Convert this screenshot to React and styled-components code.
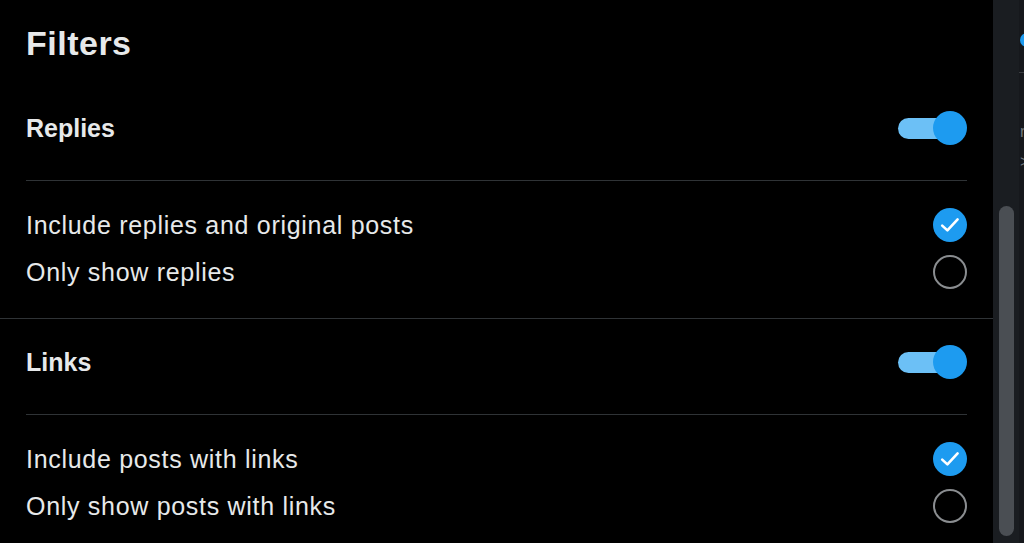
import React from 'react';
import styled, { createGlobalStyle } from 'styled-components';

const TEXT_COLOR = '#e7e9ea';
const DIVIDER_COLOR = '#2f3336';
const ACCENT_COLOR = '#1d9bf0';

const GlobalStyle = createGlobalStyle`
    html, body {
        margin: 0;
        padding: 0;
        background-color: #000;
        font-family: "Liberation Sans", Arial, sans-serif;
        overflow: hidden;
    }
`;

const Page = styled.div`
    display: flex;
    height: 543px;
    width: 1024px;
    overflow: hidden;
`;

const Panel = styled.div`
    flex: 0 0 993px;
    background-color: #000;
    color: ${TEXT_COLOR};
`;

const Title = styled.h2`
    margin: 0;
    padding: 23px 26px 22px;
    font-size: 34px;
    line-height: 40px;
    font-weight: 700;
    letter-spacing: 0.5px;
`;

const Section = styled.div`
    padding: 11px 0 23px;
    border-bottom: ${props => props.last ? 'none' : `1px solid ${DIVIDER_COLOR}`};
`;

const SectionHeader = styled.div`
    display: flex;
    align-items: center;
    justify-content: space-between;
    height: 64px;
    padding: 0 26px;
`;

const SectionLabel = styled.span`
    font-size: 25px;
    font-weight: 700;
`;

const Divider = styled.div`
    height: 1px;
    margin: 20px 26px;
    background-color: ${DIVIDER_COLOR};
`;

const Option = styled.div`
    display: flex;
    align-items: center;
    justify-content: space-between;
    height: 47px;
    padding: 0 26px;
`;

const OptionLabel = styled.span`
    font-size: 25px;
    letter-spacing: 0.7px;
    padding-top: 2px;
`;

const Toggle = styled.div`
    position: relative;
    display: flex;
    align-items: center;
    width: 69px;
    height: 34px;
`;

const ToggleTrack = styled.div`
    width: 58px;
    height: 21px;
    border-radius: 11px;
    background-color: #6cc0f6;
`;

const ToggleThumb = styled.div`
    position: absolute;
    right: 0;
    top: 0;
    width: 34px;
    height: 34px;
    border-radius: 50%;
    background-color: ${ACCENT_COLOR};
`;

const Radio = styled.div`
    box-sizing: border-box;
    display: flex;
    align-items: center;
    justify-content: center;
    width: 34px;
    height: 34px;
    border-radius: 50%;
    background-color: ${props => props.checked ? ACCENT_COLOR : 'transparent'};
    border: ${props => props.checked ? 'none' : '2px solid #8a8d90'};
`;

const Gutter = styled.div`
    flex: 0 0 26px;
    box-sizing: border-box;
    display: flex;
    padding: 206px 5px 7px 6px;
    background-color: #1a1d21;
`;

const ScrollThumb = styled.div`
    flex: 1;
    border-radius: 8px;
    background-color: #4a4e53;
`;

const SidePeek = styled.div`
    flex: 1;
    overflow: hidden;
    background-color: #16181c;
    padding-top: 33px;
`;

const PeekDot = styled.div`
    width: 14px;
    height: 14px;
    margin-left: 1px;
    border-radius: 50%;
    background-color: ${ACCENT_COLOR};
`;

const PeekLine = styled.div`
    height: 1px;
    margin: 25px 0 0;
    background-color: #3a3d41;
`;

const PeekText = styled.div`
    margin-top: 44px;
    margin-left: 1px;
    font-size: 16px;
    line-height: 30px;
    color: #71767b;
    white-space: nowrap;
`;

const Check = () => (
    <svg width="24" height="24" viewBox="0 0 24 24">
        <polyline points="4.2,12.6 9.4,17.4 19.6,6.4" fill="none" stroke="#fff" strokeWidth="2.6" strokeLinecap="round" strokeLinejoin="round" />
    </svg>
);

const FILTERS = [
    { name: 'Replies', options: ['Include replies and original posts', 'Only show replies'] },
    { name: 'Links', options: ['Include posts with links', 'Only show posts with links'] }
];

export default function App() {
    return (
        <Page>
            <GlobalStyle />
            <Panel>
                <Title>Filters</Title>
                {FILTERS.map((filter, i) => (
                    <Section key={filter.name} last={i === FILTERS.length - 1}>
                        <SectionHeader>
                            <SectionLabel>{filter.name}</SectionLabel>
                            <Toggle>
                                <ToggleTrack />
                                <ToggleThumb />
                            </Toggle>
                        </SectionHeader>
                        <Divider />
                        {filter.options.map((option, j) => (
                            <Option key={option}>
                                <OptionLabel>{option}</OptionLabel>
                                <Radio checked={j === 0}>{j === 0 && <Check />}</Radio>
                            </Option>
                        ))}
                    </Section>
                ))}
            </Panel>
            <Gutter>
                <ScrollThumb />
            </Gutter>
            <SidePeek>
                <PeekDot />
                <PeekLine />
                <PeekText>r<br />&gt;</PeekText>
            </SidePeek>
        </Page>
    );
}
